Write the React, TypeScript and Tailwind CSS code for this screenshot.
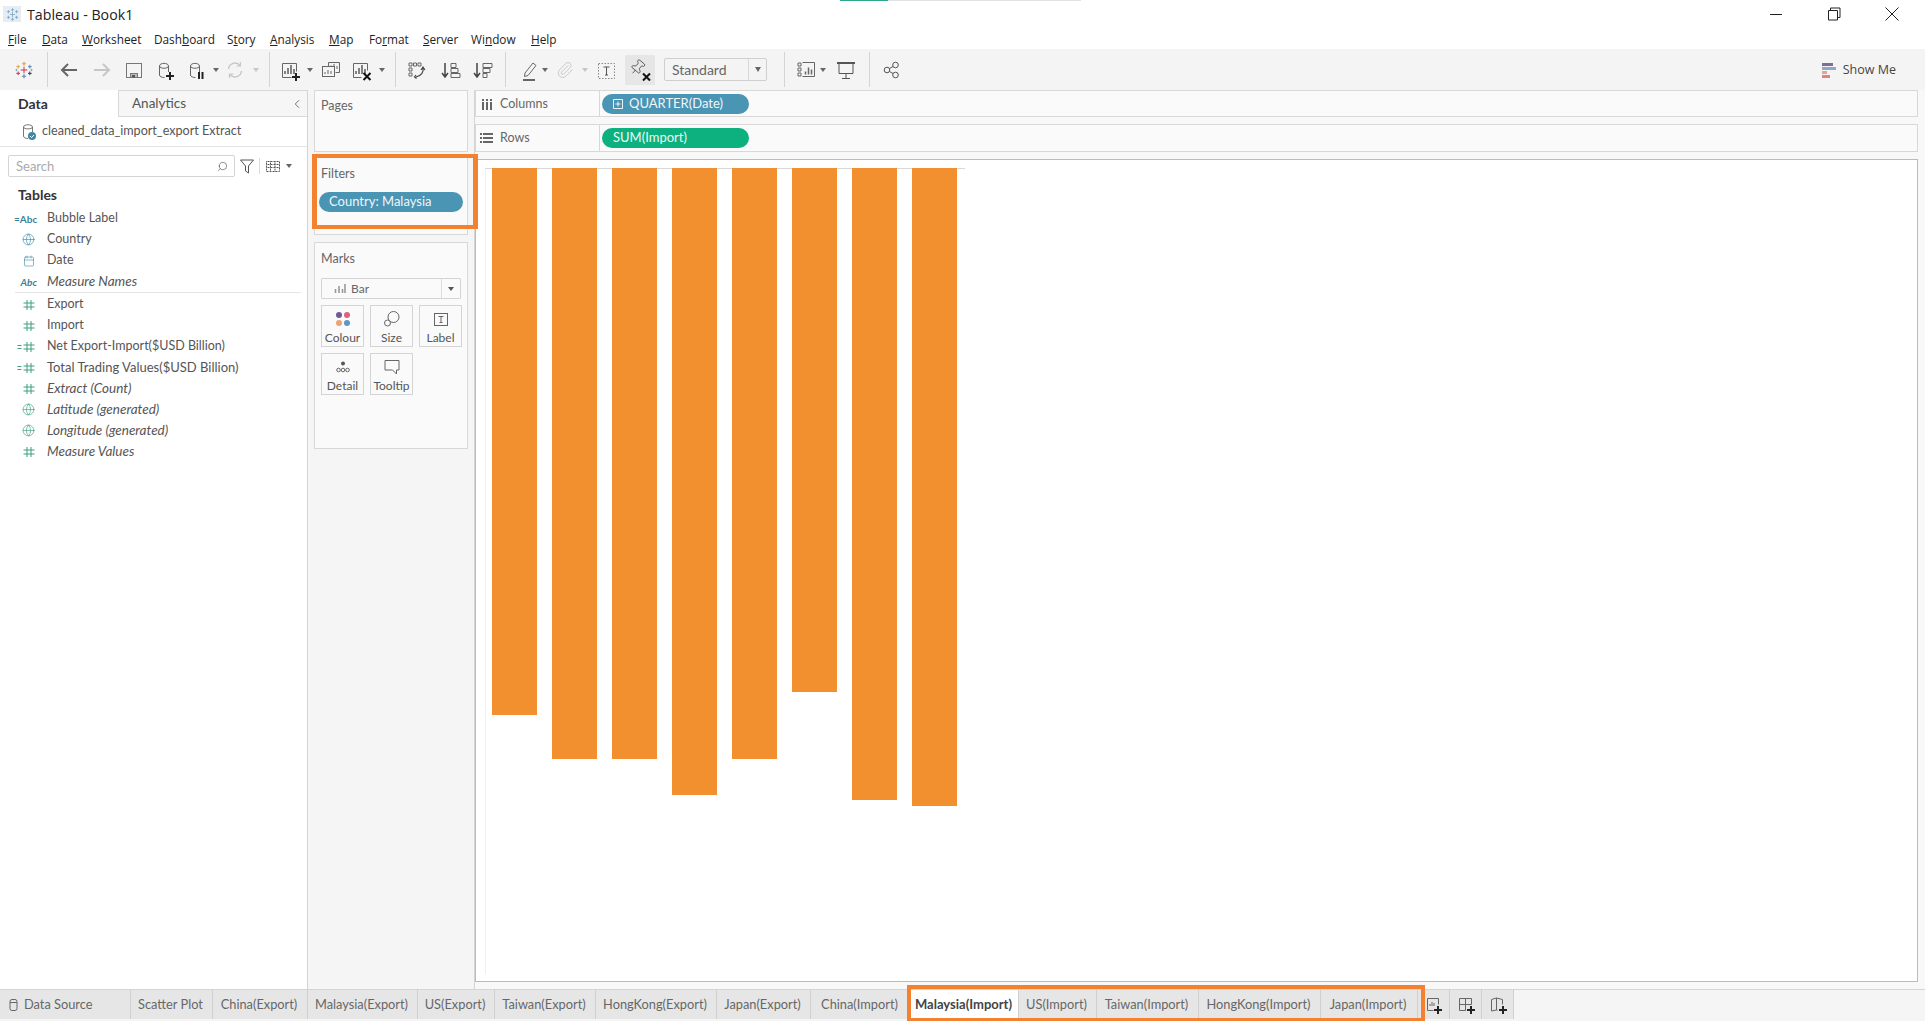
import React from "react";
import { Calendar, ChevronLeft, Globe, Paperclip, Pin, Search } from "lucide-react";

const Ic = ({ children, className = "", stroke = "#666" }: { children: React.ReactNode; className?: string; stroke?: string }) => (
  <svg width="24" height="24" viewBox="0 0 24 24" fill="none" stroke={stroke} strokeWidth="1" className={`shrink-0 ${className}`}>
    {children}
  </svg>
);

const Caret = ({ className = "", color = "border-t-[#666]" }: { className?: string; color?: string }) => (
  <div className={`w-[8px] flex justify-center shrink-0 ${className}`}>
    <div className={`w-0 h-0 border-l-[3px] border-r-[3px] border-t-[4px] border-l-transparent border-r-transparent ${color}`} />
  </div>
);

const Sep = ({ className = "" }: { className?: string }) => <div className={`w-px h-[35px] bg-[#d4d4d4] shrink-0 ${className}`} />;

const Plus = ({ x, y }: { x: number; y: number }) => (
  <path d={`M${x - 4} ${y}h8M${x} ${y - 4}v8`} stroke="#222" strokeWidth="2" />
);
const Cross = ({ x, y }: { x: number; y: number }) => (
  <path d={`M${x - 3.5} ${y - 3.5}l7 7M${x + 3.5} ${y - 3.5}l-7 7`} stroke="#111" strokeWidth="2" />
);
const Cyl = ({ stroke = "#666" }: { stroke?: string }) => (
  <path d="M6.5 8c0-3.5 9-3.5 9 0v6M6.5 8c0 3 9 3 9 0M6.5 8v9c0 1.5 2 2.5 5 2.5" stroke={stroke} />
);
const Bars = ({ x = 0, y = 0 }: { x?: number; y?: number }) => (
  <g transform={`translate(${x} ${y})`} stroke="#666" strokeWidth="1.6">
    <path d="M8 17v-3M11 17v-6M14 17v-9M17 17v-5" />
  </g>
);

const TabLogo = ({ s = 24 }: { s?: number }) => {
  const p: [number, number, number, string, number][] = [
    [12, 12, 4, "#c8344a", 1.2],
    [12, 4.5, 2.5, "#e8a33d", 1.4],
    [12, 19.5, 2.5, "#5b87b2", 1.4],
    [5, 8, 2.2, "#e8a33d", 1.2],
    [5, 16, 2.2, "#c8344a", 1.2],
    [19, 8, 2.2, "#5b87b2", 1.2],
    [19, 16, 2.2, "#1f3a63", 1.2],
    [3, 12, 1.4, "#7aa4c8", 1],
    [21, 12, 1.4, "#7aa4c8", 1],
  ];
  return (
    <svg width={s} height={s} viewBox="0 0 24 24" fill="none" className="shrink-0">
      {p.map(([x, y, r, c, w], i) => (
        <path key={i} d={`M${x - r} ${y}h${r * 2}M${x} ${y - r}v${r * 2}`} stroke={c} strokeWidth={w} />
      ))}
    </svg>
  );
};

const TitleLogo = () => (
  <svg width="15" height="15" viewBox="0 0 24 24" fill="none" stroke="#7ea3c4" strokeWidth="1.3" className="shrink-0">
    <path d="M8 12h8M12 8v8M12 2v5M9.500 4.500h5M12 17v5M9.500 19.500h5M3 7.500h5M5.500 5v5M16 7.500h5M18.500 5v5M3 16.500h5M5.500 14v5M16 16.500h5M18.500 14v5" />
  </svg>
);

const Hash = ({ eq = false }: { eq?: boolean }) => (
  <svg width="24" height="14" viewBox="0 0 24 14" fill="none" stroke="#3f9e82" strokeWidth="1" className="shrink-0">
    <path d="M13 2v10M17 2v10M9.500 5h11M9.500 9h11" />
    {eq && <path d="M3.500 5.500h4M3.500 8.500h4" stroke="#3f9e82" />}
  </svg>
);

const rows: { t: string; i: string; cls: string }[] = [
  { t: "Bubble Label", i: "eqabc", cls: "" },
  { t: "Country", i: "globeb", cls: "" },
  { t: "Date", i: "cal", cls: "" },
  { t: "Measure Names", i: "abc", cls: "italic text-[13.500px]" },
  { t: "Export", i: "hash", cls: "" },
  { t: "Import", i: "hash", cls: "" },
  { t: "Net Export-Import($USD Billion)", i: "eqhash", cls: "" },
  { t: "Total Trading Values($USD Billion)", i: "eqhash", cls: "text-[13px]" },
  { t: "Extract (Count)", i: "hash", cls: "italic text-[13.500px]" },
  { t: "Latitude (generated)", i: "globeg", cls: "italic text-[13.500px]" },
  { t: "Longitude (generated)", i: "globeg", cls: "italic text-[13.500px]" },
  { t: "Measure Values", i: "hash", cls: "italic text-[13.500px]" },
];

const RowIcon = ({ i }: { i: string }) => {
  if (i === "eqabc") return <span className="w-[24px] text-[10px] font-bold text-[#3d7f9c] text-right pr-[1px] leading-none shrink-0">=Abc</span>;
  if (i === "abc") return <span className="w-[24px] text-[10px] font-bold text-[#3d7f9c] text-right pr-[1px] leading-none shrink-0">Abc</span>;
  if (i === "globeb") return <div className="w-[24px] flex justify-end pr-[3px] shrink-0"><Globe size={13} strokeWidth={1.2} color="#3d8aa8" /></div>;
  if (i === "globeg") return <div className="w-[24px] flex justify-end pr-[3px] shrink-0"><Globe size={13} strokeWidth={1.2} color="#3f9e82" /></div>;
  if (i === "cal") return <div className="w-[24px] flex justify-end pr-[3px] shrink-0"><Calendar size={12} strokeWidth={1.2} color="#3d8aa8" /></div>;
  if (i === "eqhash") return <Hash eq />;
  return <Hash />;
};

const tabs: { t: string; w: string }[] = [
  { t: "Scatter Plot", w: "w-[82px]" },
  { t: "China(Export)", w: "w-[95px]" },
  { t: "Malaysia(Export)", w: "w-[110px]" },
  { t: "US(Export)", w: "w-[77px]" },
  { t: "Taiwan(Export)", w: "w-[101px]" },
  { t: "HongKong(Export)", w: "w-[121px]" },
  { t: "Japan(Export)", w: "w-[94px]" },
  { t: "China(Import)", w: "w-[100px]" },
  { t: "Malaysia(Import)", w: "w-[108px]" },
  { t: "US(Import)", w: "w-[78px]" },
  { t: "Taiwan(Import)", w: "w-[102px]" },
  { t: "HongKong(Import)", w: "w-[122px]" },
  { t: "Japan(Import)", w: "w-[97px]" },
];

const bars = ["h-[547px]", "h-[591px]", "h-[591px]", "h-[627px]", "h-[591px]", "h-[524px]", "h-[632px]", "h-[638px]"];

const menu: { pre: string; u: string; post: string; w: string }[] = [
  { pre: "", u: "F", post: "ile", w: "w-[34px]" },
  { pre: "", u: "D", post: "ata", w: "w-[40px]" },
  { pre: "", u: "W", post: "orksheet", w: "w-[72px]" },
  { pre: "Dash", u: "b", post: "oard", w: "w-[73px]" },
  { pre: "S", u: "t", post: "ory", w: "w-[43px]" },
  { pre: "", u: "A", post: "nalysis", w: "w-[59px]" },
  { pre: "", u: "M", post: "ap", w: "w-[40px]" },
  { pre: "Fo", u: "r", post: "mat", w: "w-[54px]" },
  { pre: "", u: "S", post: "erver", w: "w-[48px]" },
  { pre: "Wi", u: "n", post: "dow", w: "w-[60px]" },
  { pre: "", u: "H", post: "elp", w: "w-[40px]" },
];

const sysFont = "font-['Open_Sans','Liberation_Sans',sans-serif]";

const MarkCard = ({ label, children, className = "" }: { label: string; children: React.ReactNode; className?: string }) => (
  <div className={`w-[43px] h-[42px] border border-[#d4d4d4] flex flex-col items-center shrink-0 ${className}`}>
    <div className="h-[24px] flex items-center justify-center mt-[1px]">{children}</div>
    <span className="text-[12px] leading-[14px] text-[#555]">{label}</span>
  </div>
);

export default function App() {
  return (
    <div className="relative w-full h-[1021px] bg-white overflow-hidden flex flex-col font-['Lato','Liberation_Sans',sans-serif] text-[#555]">
      {/* progress strip */}
      <div className="absolute top-0 left-[840px] w-[48px] h-px bg-[#2fa58c]" />
      <div className="absolute top-0 left-[888px] w-[193px] h-px bg-[#e2e2e2]" />

      {/* title bar */}
      <div className="h-[28px] flex items-center shrink-0 pl-[3px]">
        <div className="w-[18px] h-[16px] bg-[#e6ecf3] flex items-center justify-center">
          <TitleLogo />
        </div>
        <span className={`ml-[6px] pt-[2px] text-[14.200px] text-[#222] ${sysFont}`}>Tableau - Book1</span>
        <div className="ml-auto flex pr-[4px]">
          <div className="w-[58px] flex justify-center">
            <svg width="14" height="14" viewBox="0 0 14 14" fill="none" stroke="#222"><path d="M1 7.5h12" /></svg>
          </div>
          <div className="w-[58px] flex justify-center">
            <svg width="14" height="14" viewBox="0 0 14 14" fill="none" stroke="#222"><path d="M1.5 3.5h9v9.5h-9zM3.5 3.5v-2.5h9.5v9.5h-2.5" /></svg>
          </div>
          <div className="w-[58px] flex justify-center">
            <svg width="14" height="14" viewBox="0 0 14 14" fill="none" stroke="#222"><path d="M.5.5l13 13M13.5.5l-13 13" /></svg>
          </div>
        </div>
      </div>

      {/* menu bar */}
      <div className={`h-[21px] flex items-center shrink-0 pl-[8px] pt-[2px] text-[11.800px] text-[#222] ${sysFont}`}>
        {menu.map((m) => (
          <div key={m.post} className={`${m.w} shrink-0`}>
            {m.pre}
            <span className="underline">{m.u}</span>
            {m.post}
          </div>
        ))}
      </div>

      {/* toolbar */}
      <div className="h-[41px] bg-[#f4f4f4] flex items-center shrink-0">
        <div className="w-[47px] flex justify-center"><TabLogo s={20} /></div>
        <Sep />
        <Ic className="ml-[9px]" stroke="#666"><path d="M5 12h15M11 6l-6 6 6 6" strokeWidth="2" /></Ic>
        <Ic className="ml-[9px]" stroke="#c6c6c6"><path d="M4 12h15M13 6l6 6-6 6" strokeWidth="2" /></Ic>
        <Ic className="ml-[8px]" stroke="#777"><rect x="4.5" y="5.5" width="15" height="14" /><rect x="8.5" y="15.5" width="7" height="4" fill="#bbb" /><rect x="10" y="17" width="3" height="2.5" fill="#555" stroke="none" /></Ic>
        <Ic className="ml-[7px]"><Cyl /><Plus x={17} y={18} /></Ic>
        <Ic className="ml-[7px]"><Cyl /><path d="M15 14v7M18.5 14v7" stroke="#222" strokeWidth="2" /></Ic>
        <Caret className="ml-[4px]" />
        <Ic className="ml-[3px]" stroke="#c6c6c6"><path d="M5.5 11a6.5 6.5 0 0 1 11.5-3.5M18.5 13a6.5 6.5 0 0 1-11.5 3.5" strokeWidth="1.4" /><path d="M17.5 4v4h-4M6.5 20v-4h4" strokeWidth="1.2" /></Ic>
        <Caret className="ml-[5px]" color="border-t-[#c6c6c6]" />
        <Sep className="ml-[9px]" />
        <Ic className="ml-[8px]"><path d="M4.5 5.5h14v8M4.5 5.5v14h9" /><Bars x={-1} y={-1} /><Plus x={18} y={19} /></Ic>
        <Caret className="ml-[4px]" />
        <Ic className="ml-[5px]"><path d="M9.5 8.5v-4h11v10h-4" /><path d="M12 11v-3.500M15 11v-5M18 11v-3" /><rect x="3.500" y="8.500" width="12" height="10" fill="#f4f4f4" /><path d="M6 16v-2M9 16v-4M12 16v-3" /></Ic>
        <Ic className="ml-[6px]"><path d="M4.500 5.500h14v7M4.500 5.500v14h8" /><Bars x={-1} y={-1} /><Cross x={18} y={18.500} /></Ic>
        <Caret className="ml-[5px]" />
        <Sep className="ml-[9px]" />
        <Ic className="ml-[8px]"><path d="M5 5h3v3H5zM9.500 5h3v3h-3zM14 5h3v3h-3zM5 10h3v3H5zM5 15h3v3H5z" /><path d="M19 10c1 4-2 8-7 9M17 12l2-3 2 3M12 17l-1.500 2 2 1.500" strokeWidth="1.200" stroke="#444" /></Ic>
        <Ic className="ml-[10px]"><path d="M7 5v13M4 15l3 4 3-4" strokeWidth="1.500" stroke="#444" /><path d="M13 5.500h5v4h-5zM13 10.500h7v4h-7zM13 15.500h9v4h-9z" /></Ic>
        <Ic className="ml-[8px]"><path d="M7 5v13M4 15l3 4 3-4" strokeWidth="1.500" stroke="#444" /><path d="M13 5.500h9v4h-9zM13 10.500h7v4h-7zM13 15.500h4v4h-4z" /></Ic>
        <Sep className="ml-[11px]" />
        <Ic className="ml-[11px]"><path d="M8 15l8-10 3 2.500-8 10-3.500 1z" /><path d="M6 22h12" strokeWidth="2" /></Ic>
        <Caret />
        <div className="ml-[4px] w-[24px] flex justify-center shrink-0"><Paperclip size={18} strokeWidth={1} color="#bbb" /></div>
        <Caret className="ml-[4px]" color="border-t-[#c6c6c6]" />
        <Ic className="ml-[6px]"><rect x="3.500" y="5.500" width="16" height="15" strokeDasharray="1.500 1.500" stroke="#888" /><path d="M8.500 9h6M11.500 9v8M10 17h3" stroke="#555" /></Ic>
        <div className="ml-[6px] w-[30px] h-[30px] bg-[#e6e6e6] flex items-center justify-center relative shrink-0">
          <Pin size={17} strokeWidth={1.1} color="#444" className="rotate-[40deg] -translate-x-[3px] -translate-y-[2px]" />
          <svg width="24" height="24" viewBox="0 0 24 24" fill="none" className="absolute left-[3px] top-[3px]"><Cross x={18.500} y={19} /></svg>
        </div>
        <div className="ml-[9px] w-[103px] h-[23px] border border-[#cfcfcf] rounded-[2px] flex items-center text-[14px] text-[#666] shrink-0">
          <span className="w-[84px] pl-[7px] border-r border-[#d8d8d8] h-full flex items-center">Standard</span>
          <div className="flex-1 flex justify-center"><div className="w-0 h-0 border-l-[3.5px] border-r-[3.5px] border-t-[5px] border-l-transparent border-r-transparent border-t-[#666]" /></div>
        </div>
        <Sep className="ml-[17px]" />
        <Ic className="ml-[9px]"><path d="M4 5h3v3H4zM4 10h3v3H4zM4 15h3v3H4z" /><path d="M8.500 4.500h12v14h-12" /><path d="M11.500 16.500v-3M14.500 16.500v-7M17.500 16.500v-5" strokeWidth="1.500" /></Ic>
        <Caret className="ml-[1px]" />
        <Ic className="ml-[7px]" stroke="#555"><path d="M3 5h18" strokeWidth="2" /><path d="M5 5.500v10h14v-10M12 15.500v5M8 20.500h8" /></Ic>
        <Sep className="ml-[11px]" />
        <Ic className="ml-[10px]" stroke="#555"><circle cx="7" cy="12" r="2.800" /><circle cx="15.500" cy="7" r="2.800" /><circle cx="15.500" cy="17" r="2.800" /><path d="M9.500 10.500l3.500-2M9.500 13.500l3.500 2" /></Ic>
        <div className="ml-auto flex items-center pr-[29px] pt-[1px]">
          <div className="flex flex-col gap-[1px] w-[14px] mr-[7px]">
            <div className="h-[3px] w-[11px] bg-[#7a7094]" />
            <div className="h-[3px] w-[14px] bg-[#8fa8c8]" />
            <div className="h-[3px] w-[5px] bg-[#e0a888]" />
            <div className="h-[3px] w-[8px] bg-[#e0808a]" />
          </div>
          <span className={`text-[12.500px] text-[#444] ${sysFont}`}>Show Me</span>
        </div>
      </div>

      {/* main */}
      <div className="flex-1 flex min-h-0">
        {/* data pane */}
        <div className="w-[307px] shrink-0 flex flex-col bg-white">
          <div className="h-[27px] flex shrink-0">
            <div className="w-[118px] pl-[18px] pb-[1px] flex items-center text-[14px] font-bold text-[#333]">Data</div>
            <div className="flex-1 border-l border-b border-t border-[#d8d8d8] bg-[#f6f6f6] flex items-center pl-[13px] text-[13.500px] text-[#555]">
              Analytics
              <ChevronLeft size={14} strokeWidth={1.4} color="#555" className="ml-auto mr-[3px]" />
            </div>
          </div>
          <div className="h-[30px] flex items-center border-b border-[#e4e4e4] pl-[22px] text-[12.600px] text-[#555] shrink-0">
            <svg width="15" height="18" viewBox="0 0 15 18" fill="none" className="mr-[5px] shrink-0">
              <path d="M1.500 4c0-3 9-3 9 0v5M1.500 4c0 2.500 9 2.500 9 0M1.500 4v9c0 1.500 2 2.500 4.500 2.500" stroke="#777" />
              <circle cx="10" cy="13" r="4" fill="#3d8aa8" />
              <path d="M8 13l1.500 1.500L12 12" stroke="#fff" />
            </svg>
            cleaned_data_import_export Extract
          </div>
          <div className="flex items-center h-[22px] mt-[8px] shrink-0">
            <div className="ml-[8px] w-[227px] h-[22px] border border-[#d4d4d4] rounded-[2px] flex items-center pl-[7px] pr-[6px] pt-[1px] text-[13px] text-[#aaa]">
              Search
              <Search size={11} strokeWidth={1.4} color="#555" className="ml-auto -scale-x-100" />
            </div>
            <svg width="14" height="15" viewBox="0 0 14 15" fill="none" stroke="#555" className="ml-[5px]"><path d="M.5 1h13L8.500 7v7l-3-2V7z" /></svg>
            <div className="w-px h-[16px] bg-[#ddd] ml-[5px]" />
            <svg width="14" height="11" viewBox="0 0 14 11" fill="none" stroke="#555" className="ml-[6px]"><path d="M.5.500h13v10H.5zM.5 3.500h13M.5 6.500h13M4.500.500v10M9 .500v10" strokeDasharray="1 .5" /></svg>
            <Caret className="ml-[5px]" />
          </div>
          <div className="h-[20px] mt-[7px] pl-[18px] flex items-center text-[14px] font-bold text-[#333] shrink-0">Tables</div>
          <div className="mt-[4px] flex flex-col">
            {rows.map((r, i) => (
              <React.Fragment key={r.t}>
                {i === 4 && <div className="h-px bg-[#e4e4e4] ml-[15px] mr-[6px] mb-[1px]" />}
                <div className={`h-[21px] flex items-center text-[12.500px] text-[#555] ${r.cls}`}>
                  <div className="w-[14px] shrink-0" />
                  <RowIcon i={r.i} />
                  <span className="ml-[9px] whitespace-nowrap">{r.t}</span>
                </div>
              </React.Fragment>
            ))}
          </div>
        </div>

        {/* pages / filters / marks */}
        <div className="relative w-[168px] shrink-0 bg-[#f5f5f5] border-l border-r border-[#d4d4d4] pl-[6px] flex flex-col">
          <div className="w-[154px] h-[62px] border border-[#d8d8d8] bg-[#fafafa] pl-[6px] pt-[6px] text-[12.500px] text-[#666]">Pages</div>
          <div className="w-[154px] h-[79px] mt-[4px] border border-[#d8d8d8] bg-[#fafafa] pl-[6px] pt-[8px] text-[12.500px] text-[#666]">
            Filters
            <div className="-ml-[2px] mt-[8px] w-[144px] h-[20px] rounded-full bg-[#4a94b4] flex items-center pl-[10px] text-[13px] text-[#f0f6f9]">Country: Malaysia</div>
          </div>
          <div className="w-[154px] h-[207px] mt-[7px] border border-[#d8d8d8] bg-[#fafafa] pl-[6px] pt-[8px]">
            <div className="text-[12.500px] text-[#666] h-[16px] leading-[16px]">Marks</div>
            <div className="mt-[11px] w-[140px] h-[21px] border border-[#d4d4d4] rounded-[1px] flex items-center">
              <svg width="12" height="11" viewBox="0 0 12 11" fill="none" stroke="#999" strokeWidth="1.600" className="ml-[12px]"><path d="M1.500 10V6M5 10V3M8.500 10V6M11 10V1" /></svg>
              <span className="ml-[5px] text-[12px] text-[#666]">Bar</span>
              <div className="ml-auto w-[19px] h-full border-l border-[#ddd] flex items-center justify-center">
                <div className="w-0 h-0 border-l-[3.500px] border-r-[3.500px] border-t-[4px] border-l-transparent border-r-transparent border-t-[#555]" />
              </div>
            </div>
            <div className="mt-[6px] flex gap-[6px]">
              <MarkCard label="Colour">
                <svg width="16" height="16" viewBox="0 0 16 16"><circle cx="4" cy="4" r="3" fill="#6a5c94" /><circle cx="12" cy="4" r="3" fill="#e0607a" /><circle cx="4" cy="12" r="3" fill="#eda36e" /><circle cx="12" cy="12" r="3" fill="#5e96c6" /></svg>
              </MarkCard>
              <MarkCard label="Size">
                <svg width="16" height="16" viewBox="0 0 16 16" fill="none" stroke="#666"><circle cx="9.500" cy="6" r="5.500" /><circle cx="3.500" cy="12" r="3" fill="#fafafa" /></svg>
              </MarkCard>
              <MarkCard label="Label">
                <svg width="14" height="13" viewBox="0 0 14 13" fill="none" stroke="#666"><rect x=".5" y=".5" width="13" height="12" /><path d="M4.500 3.500h5M7 3.500v6M5.500 9.500h3" /></svg>
              </MarkCard>
            </div>
            <div className="mt-[6px] flex gap-[6px]">
              <MarkCard label="Detail">
                <svg width="14" height="12" viewBox="0 0 14 12" fill="none" stroke="#666"><circle cx="7" cy="2.500" r="2" fill="#555" stroke="none" /><circle cx="2.500" cy="9" r="1.800" /><circle cx="7" cy="9" r="1.800" /><circle cx="11.500" cy="9" r="1.800" /></svg>
              </MarkCard>
              <MarkCard label="Tooltip">
                <svg width="16" height="15" viewBox="0 0 16 15" fill="none" stroke="#666"><path d="M1 .5h14v9.500h-2.500v4l-4-4H1z" /></svg>
              </MarkCard>
            </div>
          </div>
          {/* highlight */}
          <div className="absolute left-[4px] top-[64px] w-[166px] h-[75px] border-y-[4px] border-x-[5px] border-[#f3812f] z-10 pointer-events-none" />
        </div>

        {/* shelves + view */}
        <div className="flex-1 min-w-0 bg-[#f8f8f8] pr-[7px] flex flex-col">
          <div className="h-[27px] border border-[#d8d8d8] bg-[#fafafa] flex items-center shrink-0">
            <div className="w-[124px] h-full border-r border-[#d8d8d8] flex items-center pt-[1px] text-[12.500px] text-[#666] shrink-0">
              <svg width="12" height="12" viewBox="0 0 12 12" className="ml-[5px]" fill="#666"><rect x="1" y="1" width="2" height="2" /><rect x="5" y="1" width="2" height="2" /><rect x="9" y="1" width="2" height="2" /><rect x="1" y="4" width="2" height="8" /><rect x="5" y="4" width="2" height="8" /><rect x="9" y="4" width="2" height="8" /></svg>
              <span className="ml-[7px]">Columns</span>
            </div>
            <div className="ml-[2px] mt-[1px] w-[147px] h-[20px] rounded-full bg-[#4a94b4] flex items-center pl-[11px] text-[13px] text-[#f0f6f9] shrink-0">
              <svg width="10" height="10" viewBox="0 0 10 10" fill="none" stroke="#eef5f8" className="mr-[6px]"><path d="M.5.500h9v9h-9zM5 2.500v5M2.500 5h5" /></svg>
              QUARTER(Date)
            </div>
          </div>
          <div className="h-[28px] mt-[7px] border border-[#d8d8d8] bg-[#fafafa] flex items-center shrink-0">
            <div className="w-[124px] h-full border-r border-[#d8d8d8] flex items-center text-[12.500px] text-[#666] shrink-0">
              <svg width="13" height="12" viewBox="0 0 13 12" className="ml-[4px]" fill="#666"><rect x="0" y="1" width="2" height="2" /><rect x="3" y="1" width="10" height="2" /><rect x="0" y="5" width="2" height="2" /><rect x="3" y="5" width="10" height="2" /><rect x="0" y="9" width="2" height="2" /><rect x="3" y="9" width="10" height="2" /></svg>
              <span className="ml-[7px]">Rows</span>
            </div>
            <div className="ml-[2px] w-[147px] h-[20px] rounded-full bg-[#0cb17f] flex items-center pl-[11px] text-[13px] text-[#eafaf4] shrink-0">SUM(Import)</div>
          </div>
          <div className="h-[823px] mt-[7px] border border-[#bbb] bg-white shrink-0 pl-[9px] pt-[8px]">
            <div className="w-[480px] h-[806px] border-l border-t border-l-[#f0f0f0] border-t-[#d8d8d8] pl-[6px] flex items-start gap-[15px]">
              {bars.map((h, i) => (
                <div key={i} className={`w-[45px] -mt-px bg-[#f28f2e] ${h}`} />
              ))}
            </div>
          </div>
        </div>
      </div>

      {/* tab bar */}
      <div className="relative h-[32px] shrink-0 flex border-t border-[#d4d4d4] text-[12.800px] text-[#666] bg-[#f5f5f5]">
        <div className="w-[131px] h-[29px] bg-[#e6e6e6] border-r border-[#d0d0d0] flex items-center pl-[9px] pt-[1px] shrink-0">
          <svg width="9" height="12" viewBox="0 0 9 12" fill="none" stroke="#666" className="mr-[6px]"><rect x="1" y=".5" width="7" height="11" rx="2" /><path d="M1 3.500h7" /></svg>
          Data Source
        </div>
        {tabs.map((t) => (
          <div
            key={t.t}
            className={`${t.w} h-[29px] shrink-0 flex items-center justify-center pt-[1px] pr-[2px] border-r border-[#d0d0d0] ${t.t === "Malaysia(Import)" ? "bg-white font-bold text-[13px] text-[#444]" : "bg-[#e6e6e6]"}`}
          >
            {t.t}
          </div>
        ))}
        <div className="w-[32px] h-[29px] bg-[#e6e6e6] border-r border-[#d0d0d0] flex items-center justify-center shrink-0">
          <Ic><path d="M5.500 5.500h11v6M5.500 5.500v12h6" /><path d="M8 13v-2M10 13v-4M12 13v-3" /><Plus x={16} y={17} /></Ic>
        </div>
        <div className="w-[32px] h-[29px] bg-[#e6e6e6] border-r border-[#d0d0d0] flex items-center justify-center shrink-0">
          <Ic><path d="M5.500 5.500h12v6M5.500 5.500v12h6M5.500 11.500h12M11.500 5.500v12" /><Plus x={17} y={17} /></Ic>
        </div>
        <div className="w-[32px] h-[29px] bg-[#e6e6e6] border-r border-[#d0d0d0] flex items-center justify-center shrink-0">
          <Ic><path d="M5.500 6.500l5-1.500v12l-5 1zM10.500 5l6 1.500v5M10.500 17l1 .300" /><Plus x={17} y={17} /></Ic>
        </div>
        {/* highlight */}
        <div className="absolute left-[907px] -top-[5px] w-[518px] h-[37px] border-[4px] border-[#f3812f] z-10 pointer-events-none" />
      </div>
    </div>
  );
}
